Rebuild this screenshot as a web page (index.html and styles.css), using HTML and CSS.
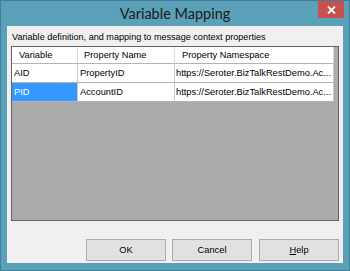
FILE: index.html
```html
<!DOCTYPE html>
<html>
<head>
<meta charset="utf-8">
<link rel="stylesheet" href="styles.css">
</head>
<body>
<div class="window">
  <div class="titlebar">
    <span class="title">Variable Mapping</span>
    <span class="close" aria-label="Close">
      <svg width="9" height="8" viewBox="0 0 9 8"><path d="M1 0.5 L8 7.5 M8 0.5 L1 7.5" stroke="#fff" stroke-width="1.8"/></svg>
    </span>
  </div>
  <div class="client">
    <div class="caption">Variable definition, and mapping to message context properties</div>
    <div class="grid">
      <div class="row head">
        <div class="cell c1">Variable</div>
        <div class="cell c2">Property Name</div>
        <div class="cell c3">Property Namespace</div>
      </div>
      <div class="row">
        <div class="cell c1">AID</div>
        <div class="cell c2">PropertyID</div>
        <div class="cell c3">https://Seroter.BizTalkRestDemo.Ac...</div>
      </div>
      <div class="row">
        <div class="cell c1 selected">PID</div>
        <div class="cell c2">AccountID</div>
        <div class="cell c3">https://Seroter.BizTalkRestDemo.Ac...</div>
      </div>
    </div>
    <div class="buttons">
      <button class="btn">OK</button>
      <button class="btn">Cancel</button>
      <button class="btn"><u>H</u>elp</button>
    </div>
  </div>
</div>
</body>
</html>
```
FILE: styles.css
```css
* { box-sizing: border-box; }
html, body { margin: 0; padding: 0; }
body { width: 350px; height: 271px; overflow: hidden; background: #5a9fb8; }

.window {
  width: 350px;
  height: 271px;
  background: #5aa0b9;
  border: 1px solid #3f8098;
  display: flex;
  flex-direction: column;
  position: relative;
}

.titlebar {
  height: 25px;
  display: flex;
  align-items: center;
  justify-content: center;
  flex: none;
}
.title {
  font-family: "Lato", "Open Sans", sans-serif;
  font-size: 14.5px;
  color: #1a1a1a;
  margin-top: -1px;
}
.close {
  position: absolute;
  top: 0;
  right: 5px;
  width: 26px;
  height: 17px;
  background: #c75050;
  display: flex;
  align-items: center;
  justify-content: center;
}
.close svg { display: block; }

.client {
  flex: 1;
  margin: 0 6px 7px 6px;
  background: #f0f0f0;
  display: flex;
  flex-direction: column;
  padding: 0 4px 2px 4px;
  font-family: "Liberation Sans", Arial, sans-serif;
  font-size: 9.3px;
  color: #000;
}

.caption {
  height: 20px;
  line-height: 14px;
  padding: 4px 0 0 1px;
  font-size: 9.1px;
  flex: none;
}

.grid {
  height: 175px;
  flex: none;
  background: #ababab;
  border: 1px solid #646464;
  display: flex;
  flex-direction: column;
}
.row {
  display: flex;
  height: 19px;
  flex: none;
}
.row.head { height: 17px; }
.cell {
  background: #fff;
  border-right: 1px solid #c8c8c8;
  border-bottom: 1px solid #b4b4b4;
  padding-left: 2px;
  display: flex;
  align-items: center;
  white-space: nowrap;
  overflow: hidden;
}
.head .cell { border-right-color: #d9d9d9; border-bottom-color: #b4b4b4; padding-left: 7px; }
.c1 { width: 66px; }
.c2 { width: 97px; }
.c3 { width: 159px; padding-left: 1px; }
.head .c2 { padding-left: 6px; }
.cell.selected { background: #3399ff; color: #fff; }

.buttons {
  margin-top: auto;
  display: flex;
  justify-content: flex-end;
  gap: 6px;
  padding-right: 0;
}
.btn {
  width: 80px;
  height: 22px;
  background: #e1e1e1;
  border: 1px solid #adadad;
  border-radius: 0;
  font-family: "Liberation Sans", Arial, sans-serif;
  font-size: 9.3px;
  color: #000;
  padding: 0;
}
.btn:last-child { margin-left: 1px; }
```
